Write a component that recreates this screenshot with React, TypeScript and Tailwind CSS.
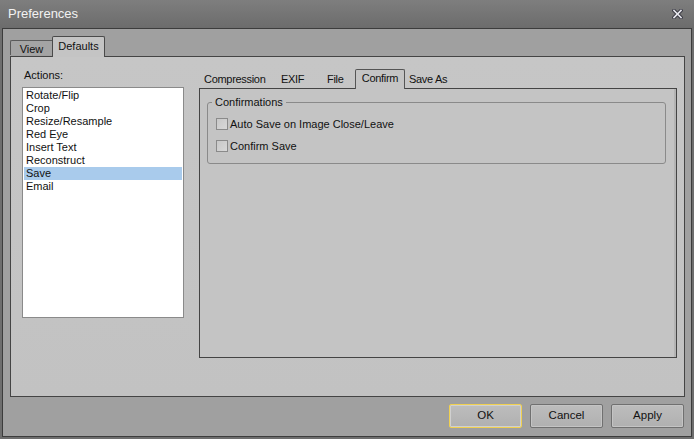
import React from 'react';

const actions = ['Rotate/Flip', 'Crop', 'Resize/Resample', 'Red Eye', 'Insert Text', 'Reconstruct', 'Save', 'Email'];

function CloseIcon() {
  return (
    <svg width="11" height="10" viewBox="0 0 11 10">
      <path d="M2 1.5 L9 8.5 M9 1.5 L2 8.5" stroke="#3a3a44" strokeWidth="3.6" strokeLinecap="square" />
      <path d="M2 1.5 L9 8.5 M9 1.5 L2 8.5" stroke="#e8e8ee" strokeWidth="1.6" strokeLinecap="square" />
    </svg>
  );
}

function Checkbox({ label }: { label: string }) {
  return (
    <div className="flex items-center h-[12px]">
      <div className="w-[12px] h-[12px] border border-[#8a8a8a] bg-gradient-to-br from-[#c8c8c8] to-[#d8d8d8] shrink-0" />
      <span className="ml-[2px]">{label}</span>
    </div>
  );
}

function Button({ label, focused }: { label: string; focused?: boolean }) {
  return (
    <div
      className={
        'w-[73px] h-[24px] flex items-center justify-center rounded-[2px] border bg-gradient-to-b from-[#bdbdbd] to-[#b0b0b0] text-[11.5px] text-[#111] ' +
        (focused ? 'border-[#f0d050] shadow-[inset_0_0_0_1px_#d0d0d0]' : 'border-[#707070] shadow-[inset_0_0_0_1px_#c4c4c4]')
      }
    >
      {label}
    </div>
  );
}

export default function App() {
  return (
    <div
      className="w-[694px] h-[439px] bg-[#6e6e6e] flex flex-col overflow-hidden text-[11px] text-[#111]"
      style={{ fontFamily: '"Liberation Sans", Arial, sans-serif' }}
    >
      {/* title bar */}
      <div className="h-[28px] shrink-0 flex items-center justify-between pl-[8px] pr-[11px] bg-gradient-to-b from-[#7e7e7e] to-[#6c6c6c]">
        <span className="text-[13px] text-[#f2f2f2]">Preferences</span>
        <CloseIcon />
      </div>

      {/* client area */}
      <div className="flex-1 ml-[2px] mr-[2px] mb-[2px] border border-[#3c3c3c] bg-[#a0a0a0] flex flex-col pl-[7px] pr-[6px] pt-[7px]">
        {/* top tabs */}
        <div className="flex items-end h-[20px] relative z-10">
          <div className="w-[42px] h-[15px] mb-[1px] border-t border-l border-[#5a5a5a] rounded-tl-[2px] bg-[#a4a4a4] flex items-center justify-center pt-[2px]">
            View
          </div>
          <div className="w-[53px] h-[21px] -mb-[1px] border border-b-0 border-[#4a4a4a] rounded-t-[2px] bg-[#c4c4c4] flex items-center justify-center pb-[2px]">
            Defaults
          </div>
        </div>

        {/* main panel */}
        <div className="h-[341px] border border-[#444] bg-gradient-to-b from-[#c6c6c6] to-[#c2c2c2] flex pl-[11px] pt-[11px]">
          {/* left column */}
          <div className="w-[162px] flex flex-col">
            <div className="h-[19px] pl-[2px] leading-[14px]">Actions:</div>
            <div className="h-[231px] bg-white border border-[#8a8a8a] pt-[1px] pl-[1px] pr-[1px]">
              {actions.map((a) => (
                <div key={a} className={'h-[13px] leading-[13px] pl-[2px] ' + (a === 'Save' ? 'bg-[#a9cbec]' : '')}>
                  {a}
                </div>
              ))}
            </div>
          </div>

          {/* right column */}
          <div className="ml-[15px] w-[478px] flex flex-col">
            <div className="flex items-end h-[20px] relative z-10 tracking-[-0.3px]">
              <div className="w-[82px] h-[18px] pl-[5px] flex items-center">Compression</div>
              <div className="w-[46px] h-[18px] flex items-center">EXIF</div>
              <div className="w-[28px] h-[18px] flex items-center">File</div>
              <div className="w-[50px] h-[20px] -mb-[1px] border border-b-0 border-[#555] rounded-t-[2px] bg-[#c4c4c4] flex items-center justify-center pb-[3px]">
                Confirm
              </div>
              <div className="h-[18px] pl-[4px] flex items-center">Save As</div>
            </div>
            <div className="h-[270px] border border-[#444] bg-[#c4c4c4] pl-[7px] pr-[10px] pt-[5px] shadow-[inset_-2px_0_0_#b4b4b4]">
              <div className="relative h-[62px] border border-[#8a8a8a] rounded-[3px] mt-[8px] pl-[8px] pt-[15px]">
                <span className="absolute -top-[8px] left-[4px] px-[3px] bg-[#c4c4c4] leading-[14px]">Confirmations</span>
                <div className="flex flex-col gap-[10px]">
                  <Checkbox label="Auto Save on Image Close/Leave" />
                  <Checkbox label="Confirm Save" />
                </div>
              </div>
            </div>
          </div>
        </div>

        {/* buttons */}
        <div className="flex justify-end gap-[8px] pt-[7px] pr-[1px]">
          <Button label="OK" focused />
          <Button label="Cancel" />
          <Button label="Apply" />
        </div>
      </div>
    </div>
  );
}
